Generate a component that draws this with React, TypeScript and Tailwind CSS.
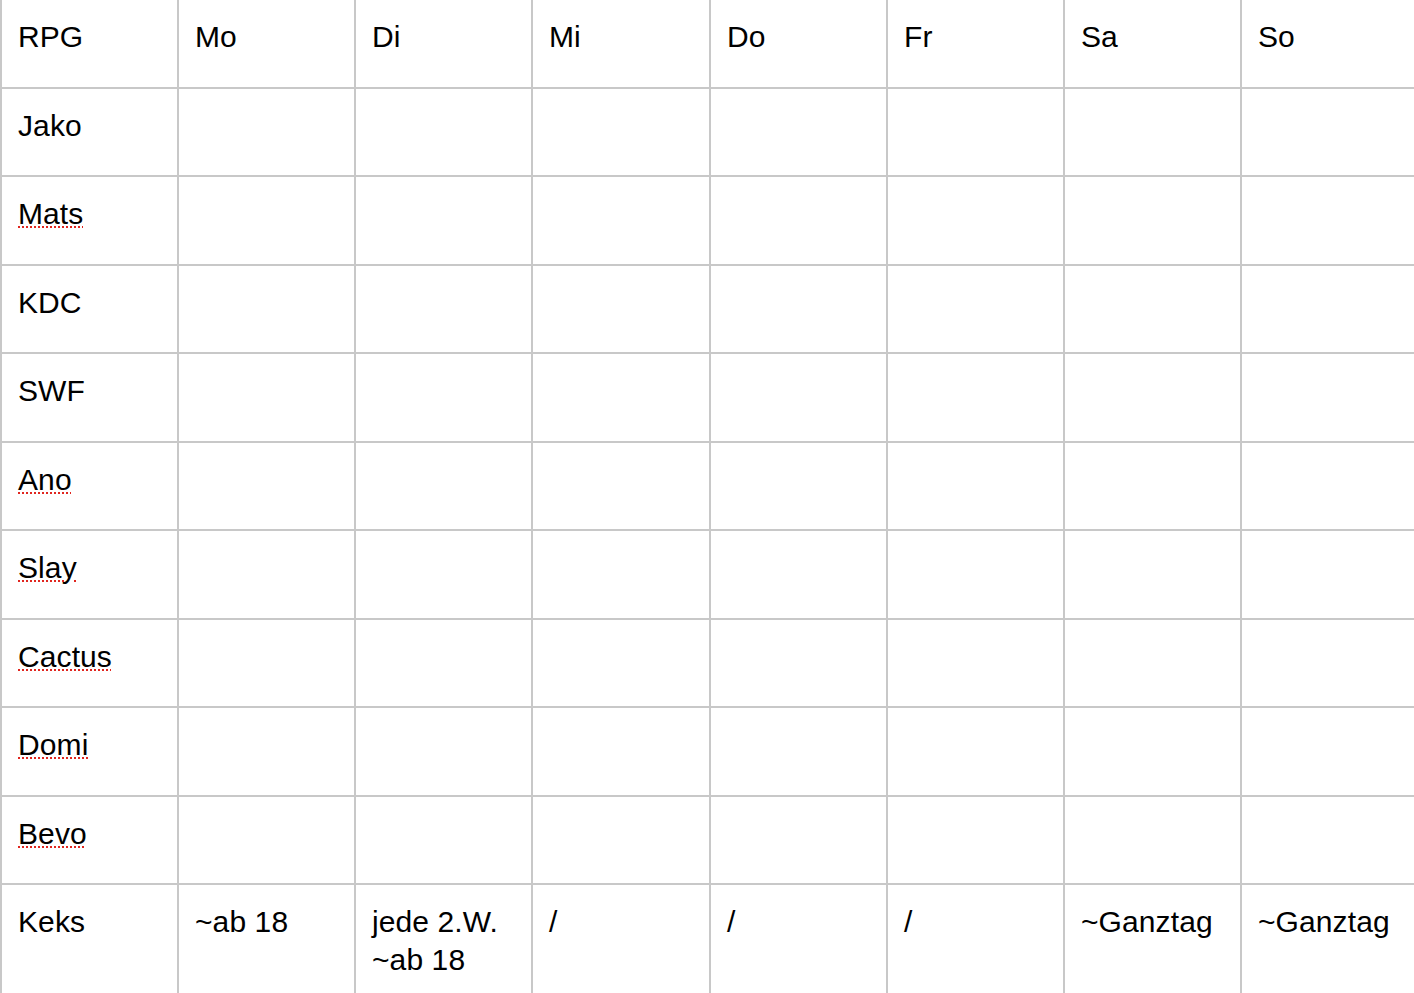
import React from "react";

const headers = ["RPG", "Mo", "Di", "Mi", "Do", "Fr", "Sa", "So"];
const names: { n: string; spell: boolean }[] = [
  { n: "Jako", spell: false },
  { n: "Mats", spell: true },
  { n: "KDC", spell: false },
  { n: "SWF", spell: false },
  { n: "Ano", spell: true },
  { n: "Slay", spell: true },
  { n: "Cactus", spell: true },
  { n: "Domi", spell: true },
  { n: "Bevo", spell: true },
];

const keks: React.ReactNode[] = [
  "Keks",
  "~ab 18",
  <>
    jede 2.W.
    <br />
    ~ab 18
  </>,
  "/",
  "/",
  "/",
  "~Ganztag",
  "~Ganztag",
];

function Cell({ children, tall }: { children?: React.ReactNode; tall?: boolean }) {
  return (
    <div
      className={
        "bg-white pl-[16px] pt-[17.5px] text-[30px] leading-[38px] text-black whitespace-nowrap tracking-[0.1px] " +
        (tall ? "h-[130px]" : "")
      }
    >
      {children}
    </div>
  );
}

export default function App() {
  return (
    <div
      className="h-[993px] w-[1414px] overflow-hidden bg-white"
      style={{ fontFamily: '"Liberation Sans", Arial, sans-serif' }}
    >
      <div className="grid w-max grid-cols-[175px_175px_175px_176px_175px_175px_175px_180px] grid-rows-[87px_86px_87px_86px_87px_86px_87px_86px_87px_86px_auto] gap-[2px] bg-[#c8c8c8] pl-[2px]">
        {headers.map((h) => (
          <Cell key={h}>{h}</Cell>
        ))}
        {names.map((r) => (
          <React.Fragment key={r.n}>
            <Cell>
              {r.spell ? (
                <span className="underline decoration-dotted decoration-[#e0261f] decoration-2 underline-offset-[3px]">
                  {r.n}
                </span>
              ) : (
                r.n
              )}
            </Cell>
            {Array.from({ length: 7 }).map((_, i) => (
              <Cell key={i} />
            ))}
          </React.Fragment>
        ))}
        {keks.map((k, i) => (
          <Cell key={i} tall>
            {k}
          </Cell>
        ))}
      </div>
    </div>
  );
}
